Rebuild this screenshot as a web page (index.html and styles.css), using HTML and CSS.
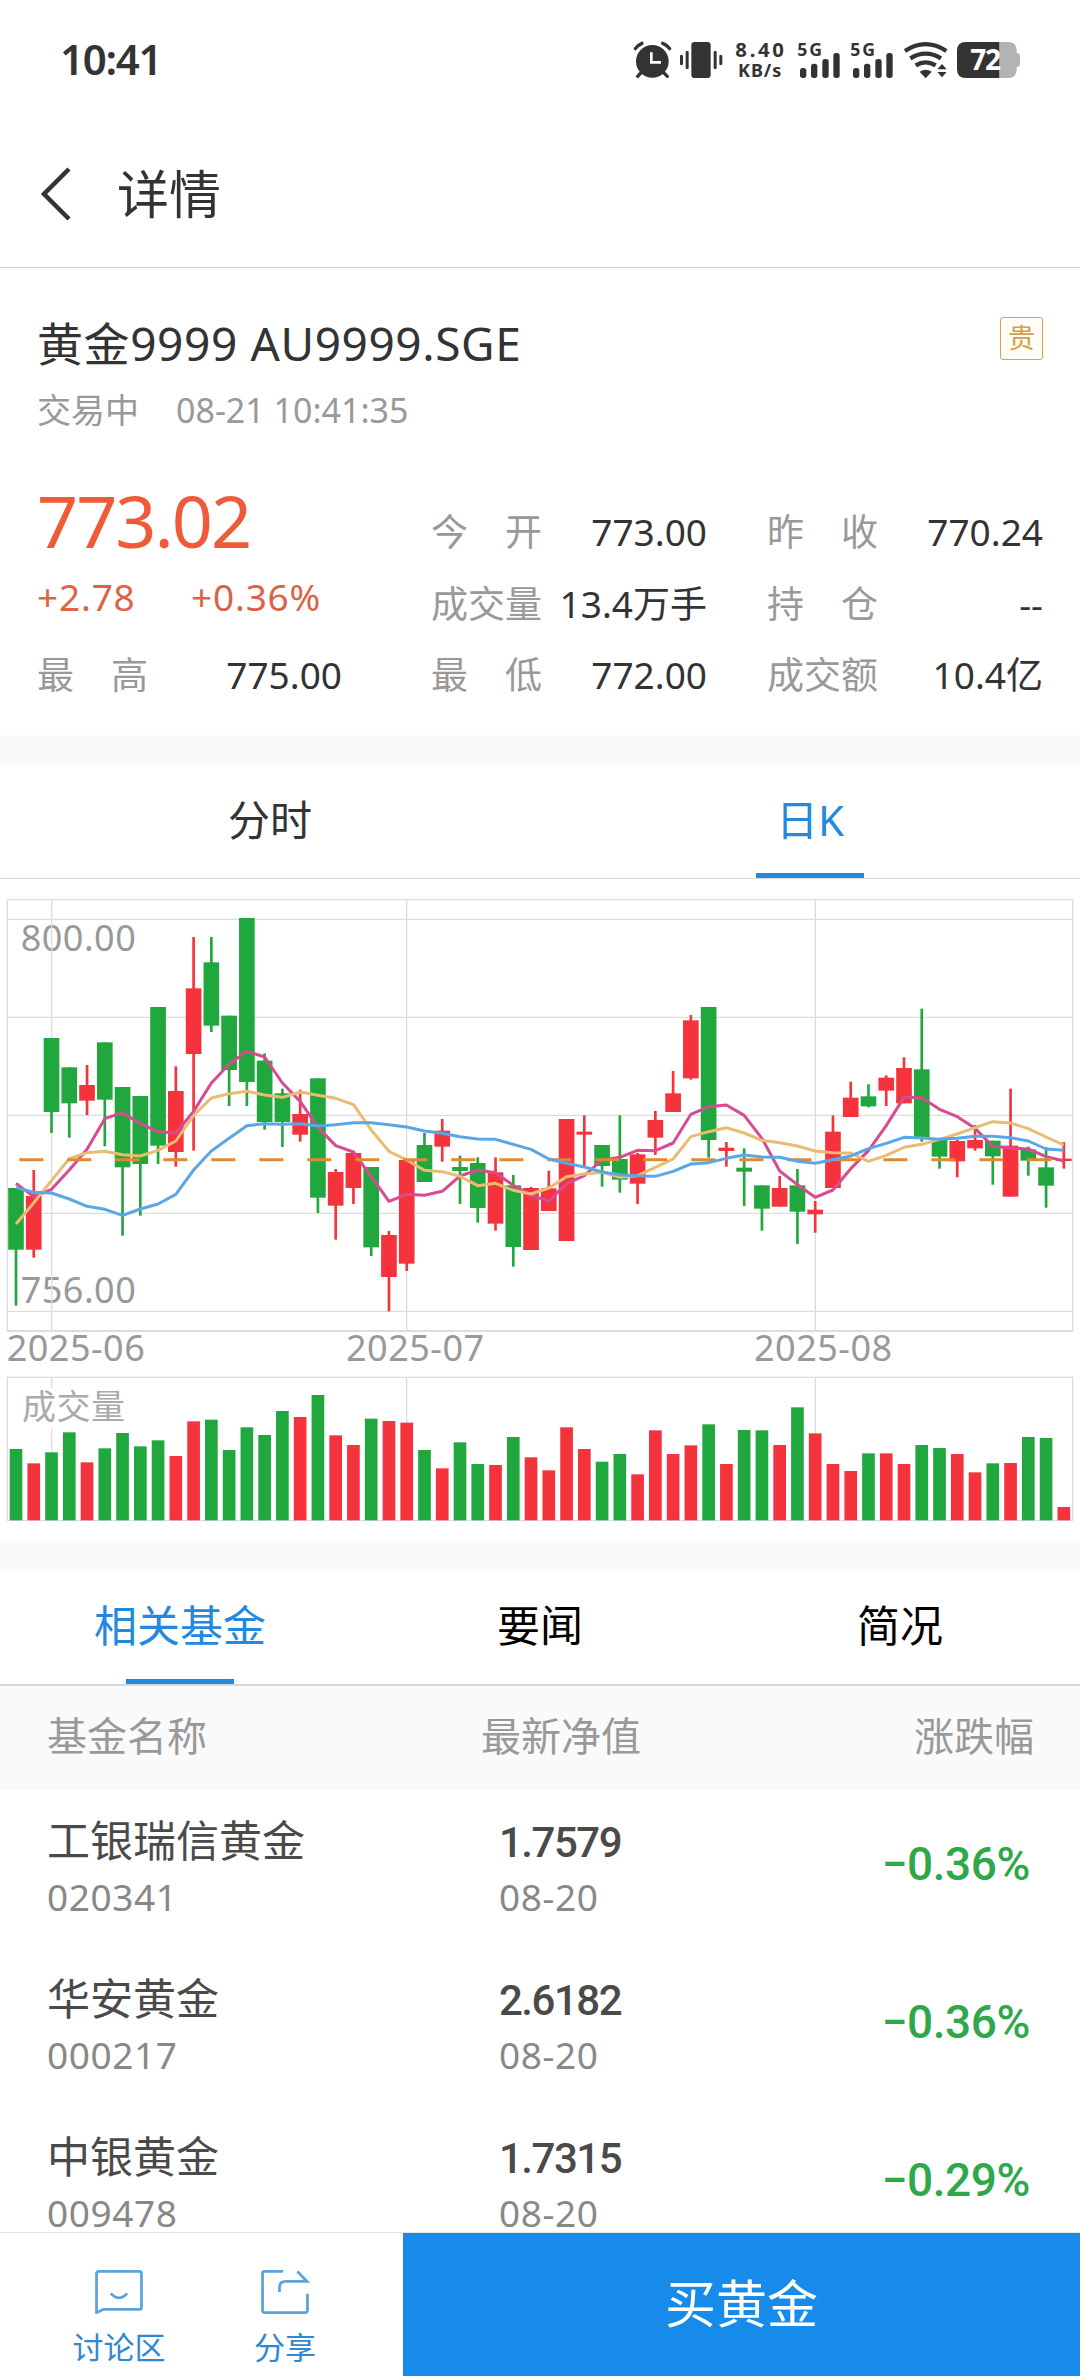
FILE: index.html
```html
<!DOCTYPE html>
<html lang="zh-CN">
<head>
    <meta charset="UTF-8">
    <meta name="viewport" content="width=device-width, initial-scale=1.0">
    <title>详情</title>
    <link rel="stylesheet" href="styles.css">
</head>
<body>

    <div class="status-bar">
        <span class="time">10:41</span>
        <svg class="status-icons" viewBox="0 30 1440 180" fill="#333">
            <!-- alarm -->
            <circle cx="157" cy="124" r="49"/>
            <path d="M106 86Q113 75 126 70M209 86Q202 75 188 70M125 156L113 169M189 156L202 169" fill="none" stroke="#333" stroke-width="10" stroke-linecap="round"/>
            <path d="M154 97V127H183" fill="none" stroke="#fff" stroke-width="8"/>
            <!-- vibrate -->
            <rect x="274" y="66" width="58" height="108" rx="10"/>
            <rect x="240" y="105" width="9" height="30" rx="3"/>
            <rect x="257" y="93" width="9" height="54" rx="3"/>
            <rect x="341" y="93" width="9" height="54" rx="3"/>
            <rect x="358" y="105" width="9" height="30" rx="3"/>
            <!-- network speed -->
            <text x="406" y="111" font-size="61" textLength="146">8.40</text>
            <text x="414" y="170" font-size="54" textLength="130">KB/s</text>
            <!-- signal -->
            <g id="signal">
                <text x="592" y="107" font-size="53" textLength="74">5G</text>
                <rect x="600" y="144" width="19" height="30" rx="8"/>
                <rect x="633" y="131" width="19" height="43" rx="8"/>
                <rect x="667" y="117" width="19" height="57" rx="8"/>
                <rect x="700" y="99" width="19" height="75" rx="8"/>
            </g>
            <use href="#signal" x="159"/>
            <!-- wifi -->
            <path d="M915 93Q977 52 1039 93M931 115Q977 87 1023 115M947 136Q977 118 1007 136" fill="none" stroke="#333" stroke-width="13"/>
            <path d="M959 155Q977 144 995 155L977 175ZM1026 132L1040 148H1012ZM1012 156H1040L1026 172Z"/>
            <!-- battery -->
            <path d="M1198 66H1225Q1250 66 1250 92V99Q1260 100 1260 108V132Q1260 140 1250 141V148Q1250 174 1225 174H1198Z" fill="#b3b3b3"/>
            <path d="M1198 66H1097Q1071 66 1071 92V148Q1071 174 1097 174H1198Z"/>
            <text x="1111" y="150" font-size="84" fill="#fff" textLength="92">72</text>
        </svg>
    </div>

    <div class="header">
        <svg class="back" viewBox="0 0 32 54"><path d="M29 2L4 27L29 52" fill="none" stroke="#333" stroke-width="4.5"/></svg>
        <h1>详情</h1>
    </div>

    <div class="quote">
        <div class="quote-title">
            <h2>黄金9999 AU9999.SGE</h2>
            <span class="badge">贵</span>
        </div>
        <div class="quote-time"><span>交易中</span><span>08-21 10:41:35</span></div>
        <div class="stats">
            <div class="price-box">
                <div class="price">773.02</div>
                <div class="change"><span>+2.78</span><span>+0.36%</span></div>
            </div>
            <div class="stat"><label><i>今</i><i>开</i></label><span>773.00</span></div>
            <div class="stat"><label><i>昨</i><i>收</i></label><span>770.24</span></div>
            <div class="stat"><label><i>成</i><i>交</i><i>量</i></label><span>13.4万手</span></div>
            <div class="stat"><label><i>持</i><i>仓</i></label><span>--</span></div>
            <div class="stat wide"><label><i>最</i><i>高</i></label><span>775.00</span></div>
            <div class="stat"><label><i>最</i><i>低</i></label><span>772.00</span></div>
            <div class="stat"><label><i>成</i><i>交</i><i>额</i></label><span>10.4亿</span></div>
        </div>
    </div>

    <div class="divider"></div>

    <div class="tabs">
        <div class="tab">分时</div>
        <div class="tab active">日K</div>
    </div>

    <div class="chart">
        <svg id="kline" viewBox="0 0 3240 1980"></svg>
    </div>

    <div class="divider"></div>

    <div class="tabs fund-tabs">
        <div class="tab active">相关基金</div>
        <div class="tab">要闻</div>
        <div class="tab">简况</div>
    </div>

    <div class="fund-head">
        <span>基金名称</span><span>最新净值</span><span>涨跌幅</span>
    </div>
    <div class="fund-list">
        <div class="fund">
            <div><p class="name">工银瑞信黄金</p><p class="sub">020341</p></div>
            <div><p class="value">1.7579</p><p class="sub">08-20</p></div>
            <span class="rate">−0.36%</span>
        </div>
        <div class="fund">
            <div><p class="name">华安黄金</p><p class="sub">000217</p></div>
            <div><p class="value">2.6182</p><p class="sub">08-20</p></div>
            <span class="rate">−0.36%</span>
        </div>
        <div class="fund">
            <div><p class="name">中银黄金</p><p class="sub">009478</p></div>
            <div><p class="value">1.7315</p><p class="sub">08-20</p></div>
            <span class="rate">−0.29%</span>
        </div>
    </div>

    <div class="footer">
        <div class="actions">
            <div class="action">
                <svg viewBox="0 0 52 48"><path d="M4 1.5H48Q50.500 1.5 50.500 4V40.500Q50.500 43 48 43H9L1.500 46.500V4Q1.500 1.500 4 1.500ZM17 25.500Q26 35.500 35 25.500"/></svg>
                <span>讨论区</span>
            </div>
            <div class="action">
                <svg viewBox="0 0 52 48"><path d="M24 1.500H3.500Q1.500 1.500 1.500 4V44Q1.500 46.500 4 46.500H48Q50.500 46.500 50.500 44V26M20 24V19Q20 12.500 27 12.500H50L39.500 1.500"/></svg>
                <span>分享</span>
            </div>
        </div>
        <button class="buy">买黄金</button>
    </div>

    <script>
        // [up, high, body top, body bottom, low, volume]
        const candles = [
            [0,924,924,1109,1277,214],[1,870,948,1109,1133,171],[0,474,474,696,759,204],[0,562,562,670,773,264],
            [1,555,615,662,705,174],[0,487,487,659,799,216],[0,621,621,862,1067,262],[0,648,648,852,1007,222],
            [0,381,381,797,852,240],[1,559,633,816,860,193],[1,171,325,522,812,297],[0,171,247,437,456,302],
            [0,407,407,570,678,211],[0,114,114,606,678,279],[0,520,542,726,749,256],[0,626,640,726,801,328],
            [1,629,702,764,785,310],[0,595,595,953,999,376],[1,867,876,977,1079,255],[1,819,819,924,972,226],
            [0,861,861,1102,1128,305],[1,1053,1065,1191,1294,298],[1,840,840,1151,1173,293],[0,759,795,906,906,211],
            [1,717,752,800,845,156],[0,827,861,873,972,234],[0,832,849,984,1028,169],[1,832,877,1031,1052,166],
            [0,885,916,1101,1160,250],[1,921,924,1110,1110,189],[1,872,925,993,993,150],[1,717,717,1083,1083,279],
            [1,706,755,764,858,214],[0,795,795,858,920,176],[0,706,837,899,938,199],[1,819,823,911,972,138],
            [1,693,720,773,825,270],[1,573,640,696,696,199],[1,405,421,595,599,225],[0,381,381,780,833,288],
            [1,786,803,813,860,169],[0,805,863,875,978,271],[0,916,916,986,1052,270],[1,888,924,980,980,226],
            [0,867,916,995,1092,339],[1,963,989,1003,1058,261],[1,706,755,924,924,169],[1,605,653,711,711,148],
            [0,613,649,679,682,201],[1,586,593,632,678,201],[1,532,564,670,670,169],[0,386,568,773,785,226],
            [0,780,780,830,866,217],[1,779,783,844,892,199],[1,735,780,805,812,144],[0,782,782,829,914,171],
            [1,626,797,950,950,172],[0,800,808,842,887,250],[0,801,862,917,983,247],[1,786,836,843,866,40]
        ];
        const ma5 = [910,950,928,870,808,716,698,731,755,759,694,609,553,514,531,609,664,742,797,816,889,964,943,946,934,888,870,878,916,946,963,911,887,840,832,811,812,789,703,680,675,706,775,873,914,952,930,866,812,737,652,653,688,710,745,799,804,807,830,843];
        const ma10 = [1032,968,902,836,818,814,824,828,811,783,706,654,641,634,645,652,636,646,655,674,750,814,840,871,875,889,917,910,931,942,924,890,882,877,892,887,862,837,770,755,743,759,781,788,798,813,818,819,844,826,802,793,778,762,743,725,729,746,771,795];
        const ma20 = [922,937,939,957,979,988,1006,987,972,943,870,813,775,737,731,733,731,738,734,728,728,734,741,753,760,770,777,778,793,808,837,850,861,876,884,888,889,874,852,848,835,825,831,832,844,850,839,828,806,790,772,774,778,775,769,769,773,783,807,811];

        const x = i => 48 + i * 53.28;
        const line = (cls, points) => `<polyline class="${cls}" points="${points.map((y, i) => x(i) + ',' + y).join(' ')}"/>`;

        let out = '<text x="62" y="212">800.00</text><text x="62" y="1268">756.00</text>';
        out += '<text x="20" y="1442">2025-06</text><text x="1038" y="1442">2025-07</text><text x="2262" y="1442">2025-08</text>';

        // grid
        out += '<path class="grid" d="M22 59H3218V1353M22 59V1353M22 118H3218M22 412H3218M22 706H3218M22 1000H3218M22 1294H3218M155 59V1353M1220 59V1353M2446 59V1353"/>';
        out += '<path class="grid" d="M22 1921V1492H3218V1921ZM155 1492V1921M1220 1492V1921M2446 1492V1921"/>';
        out += '<path class="grid base" d="M20 1353H3220"/>';
        out += '<rect x="60" y="1525" width="320" height="120" fill="#fff"/><text class="vol" x="66" y="1618">成交量</text>';

        candles.forEach(([up, high, top, bottom, low, vol], i) => {
            out += `<g class="${up ? 'up' : 'down'}">
                <rect x="${x(i) - 4}" y="${high}" width="8" height="${low - high}"/>
                <rect x="${x(i) - 23.5}" y="${top}" width="47" height="${bottom - top}"/>
                <rect x="${x(i) - 19}" y="${1921 - vol}" width="38" height="${vol}"/>
            </g>`;
        });

        out += line('ma5', ma5) + line('ma10', ma10);
        out += '<path class="last" d="M58 839H3218"/>';
        out += line('ma20', ma20);
        document.getElementById('kline').innerHTML = out;
    </script>

</body>
</html>
```
FILE: styles.css
```css
* {
    margin: 0;
    padding: 0;
    box-sizing: border-box;
    font-family: 'Noto Sans', 'Noto Sans CJK SC', sans-serif;
}
body {
    width: 1080px;
    height: 2376px;
    display: flex;
    flex-direction: column;
    background-color: #fff;
    color: #333;
    overflow: hidden;
}
body > div {
    flex-shrink: 0;
}
i {
    font-style: normal;
}

/* status bar + header */
.status-bar {
    display: flex;
    align-items: center;
    justify-content: space-between;
    height: 120px;
    padding-left: 60px;
}
.time {
    padding-bottom: 3px;
    font-size: 42px;
    font-weight: 600;
    letter-spacing: -1.3px;
}
.status-icons {
    width: 480px;
    height: 60px;
    font-weight: 700;
}
.header {
    display: flex;
    align-items: center;
    height: 148px;
    padding-left: 40px;
    border-bottom: 1px solid #ccc;
}
.back {
    width: 32px;
    height: 54px;
    margin-right: 45px;
}
h1 {
    font-size: 52px;
    font-weight: 400;
    line-height: 60px;
}

/* quote */
.quote {
    height: 467px;
    padding: 45px 37px 0;
}
.quote-title {
    display: flex;
    justify-content: space-between;
    line-height: 60px;
}
h2 {
    font-size: 46px;
    font-weight: 400;
    letter-spacing: 0.6px;
}
.badge {
    width: 43px;
    height: 43px;
    margin-top: 4px;
    border: 1px solid #d5a548;
    border-radius: 3px;
    background-color: #fffdf6;
    color: #d5a042;
    font-size: 27px;
    line-height: 39px;
    text-align: center;
}
.quote-time {
    display: flex;
    gap: 37px;
    margin-top: 12px;
    color: #999;
    font-size: 34px;
    line-height: 50px;
}
.stats {
    display: grid;
    grid-template-columns: 394px 336px 276px;
    grid-template-rows: 72px 71px 72px;
    margin-top: 61px;
}
.price-box {
    grid-row: span 2;
}
.price {
    color: #ee5a3a;
    font-size: 72px;
    line-height: 48px;
    letter-spacing: -2px;
}
.change {
    display: flex;
    margin-top: 28px;
    color: #dd6246;
    font-size: 37px;
    line-height: 50px;
    letter-spacing: 0.8px;
}
.change span:first-child {
    width: 154px;
}
.stat {
    display: flex;
    justify-content: space-between;
    width: 276px;
    font-size: 37px;
    line-height: 72px;
}
.stat.wide {
    width: 305px;
}
.stat label {
    display: flex;
    justify-content: space-between;
    width: 111px;
    color: #999;
}

.divider {
    height: 29px;
    background-color: #fafafa;
}

/* tabs */
.tabs {
    display: flex;
    height: 115px;
    border-bottom: 1px solid #d8d8d8;
}
.tab {
    flex: 1;
    display: flex;
    flex-direction: column;
    align-items: center;
    justify-content: space-between;
    padding-top: 26px;
    font-size: 42px;
    line-height: 60px;
}
.tab::after {
    content: '';
    width: 108px;
    height: 5px;
}
.tab.active {
    color: #2289dc;
}
.tab.active::after {
    background-color: #2289dc;
}
.fund-tabs {
    color: #000;
    height: 116px;
    border-bottom-width: 2px;
}
.fund-tabs .tab {
    font-size: 43px;
}

/* chart */
.chart {
    height: 662px;
    padding-top: 1px;
}
#kline {
    display: block;
    width: 1080px;
    height: 660px;
}
#kline text {
    font-size: 108px;
    letter-spacing: 1.5px;
    fill: #999;
}
#kline .vol {
    font-size: 102px;
    fill: #aaa;
}
.grid {
    fill: none;
    stroke: #ddd;
    stroke-width: 4;
}
.base {
    stroke-width: 6;
}
.up {
    fill: #f5333c;
}
.down {
    fill: #20a83f;
}
polyline {
    fill: none;
    stroke-width: 9;
    stroke-linejoin: round;
}
.ma5 {
    stroke: #d84b93;
}
.ma10 {
    stroke: #ebbb72;
}
.ma20 {
    stroke: #5aa7e8;
}
.last {
    fill: none;
    stroke: #df8a30;
    stroke-width: 9;
    stroke-dasharray: 72 72;
}

/* funds */
.fund-head {
    display: flex;
    height: 104px;
    padding: 0 46px 0 47px;
    background-color: #fafafa;
    color: #999;
    font-size: 40px;
    line-height: 100px;
}
.fund-head span:first-child {
    width: 434px;
}
.fund-head span:last-child {
    margin-left: auto;
}
.fund-list {
    flex: 1 1 0;
    min-height: 0;
    overflow: hidden;
}
.fund {
    display: grid;
    grid-template-columns: 452px 1fr auto;
    height: 158px;
    padding: 21px 50px 0 47px;
}
.name {
    color: #4a4a4a;
    font-size: 43px;
    line-height: 60px;
}
.value {
    color: #4a4a4a;
    font-family: Roboto, sans-serif;
    font-size: 42px;
    font-weight: 500;
    line-height: 64px;
    height: 60px;
    letter-spacing: -1.5px;
}
.sub {
    margin-top: 7px;
    color: #888;
    font-size: 37px;
    line-height: 38px;
    letter-spacing: 0.6px;
}
.rate {
    color: #2ea84a;
    font-family: Roboto, sans-serif;
    font-size: 46px;
    font-weight: 500;
    line-height: 107px;
    letter-spacing: -0.4px;
}

/* footer */
.footer {
    display: flex;
    height: 144px;
    border-top: 1px solid #e6e6e6;
}
.actions {
    display: flex;
    width: 403px;
    padding: 37px 0 0 36px;
}
.action {
    display: flex;
    flex-direction: column;
    align-items: center;
    width: 166px;
    color: #3088d2;
    font-size: 31px;
    line-height: 58px;
}
.action svg {
    width: 52px;
    height: 48px;
    margin-bottom: 4px;
    fill: none;
    stroke: #5ba3da;
    stroke-width: 3;
}
.buy {
    flex: 1;
    padding-bottom: 8px;
    border: none;
    background-color: #178bea;
    color: #fff;
    font-size: 51px;
}
```
